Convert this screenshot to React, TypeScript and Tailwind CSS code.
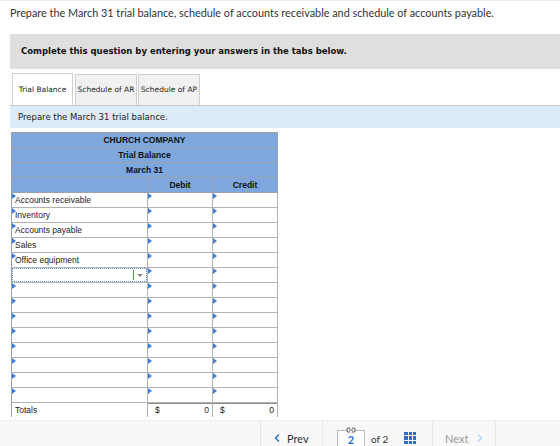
import React from "react";
import { ChevronLeft, ChevronRight, Link2 } from "lucide-react";

const verdana = { fontFamily: '"DejaVu Sans", Verdana, sans-serif' };
const arial = { fontFamily: '"Liberation Sans", Arial, sans-serif' };
const proxima = { fontFamily: 'Lato, "Open Sans", sans-serif' };

function Marker() {
  return (
    <span className="absolute left-0 top-0 w-0 h-0 border-t-[3px] border-b-[3px] border-l-[4px] border-t-transparent border-b-transparent border-l-[#3f7fd9]" />
  );
}

const accounts = ["Accounts receivable", "Inventory", "Accounts payable", "Sales", "Office equipment"];

const rowGrid = "grid grid-cols-[136px_65px_65px] h-[15px]";

function HeaderRow({ text }: { text: string }) {
  return (
    <div className="h-[15px] bg-[#7ea7de] border-b border-r border-[#9aa3ad] flex items-center justify-center font-bold text-[8.5px] text-[#111]">
      {text}
    </div>
  );
}

function Cell({ children }: { children?: React.ReactNode }) {
  return (
    <div className="relative border-r border-b border-[#b3b3b3] pl-[3px] flex items-end">
      <Marker />
      {children}
    </div>
  );
}

export default function App() {
  const blanks = Array.from({ length: 8 });
  return (
    <div className="w-[560px] h-[446px] overflow-hidden bg-white relative border-t border-[#ececec]">
      <p className="ml-[10px] mt-[5px] text-[10.85px] leading-[14px] text-[#333]" style={proxima}>
        Prepare the March 31 trial balance, schedule of accounts receivable and schedule of accounts payable.
      </p>

      <div className="ml-[10px] mt-[14px] h-[35px] bg-[#dfdfdf] flex items-center pl-[11px]">
        <span className="text-[8.5px] font-bold text-[#111]" style={verdana}>
          Complete this question by entering your answers in the tabs below.
        </span>
      </div>

      <div className="ml-[10px] mt-[4px]">
        <div className="flex pl-[2px] h-[32px] items-end">
          <div className="h-[32px] w-[61px] bg-white border border-b-0 border-[#cfcfcf] flex items-center justify-center text-[7.5px] text-[#222] relative z-10 whitespace-nowrap" style={verdana}>
            Trial Balance
          </div>
          <div className="ml-[2px] h-[31px] w-[62px] bg-[#f1f1f1] border border-b-0 border-[#cfcfcf] flex items-center justify-center text-[7.5px] text-[#222] whitespace-nowrap" style={verdana}>
            Schedule of AR
          </div>
          <div className="ml-[1px] h-[31px] w-[62px] bg-[#f1f1f1] border border-b-0 border-[#cfcfcf] flex items-center justify-center text-[7.5px] text-[#222] whitespace-nowrap" style={verdana}>
            Schedule of AP
          </div>
        </div>
        <div className="h-[23px] bg-[#dcebf8] border-t border-[#c9c9c9] flex items-center pl-[8px]">
          <span className="text-[8.5px] text-[#222]" style={verdana}>
            Prepare the March 31 trial balance.
          </span>
        </div>
      </div>

      <div className="ml-[11px] mt-[4px] w-[267px] border-l border-[#9aa3ad] text-[#222]" style={arial}>
        <div className="border-t border-[#9aa3ad]">
          <HeaderRow text="CHURCH COMPANY" />
          <HeaderRow text="Trial Balance" />
          <HeaderRow text="March 31" />
          <div className={`${rowGrid} bg-[#7ea7de] font-bold text-[8.5px] text-[#111]`}>
            <div className="border-r border-b border-[#9aa3ad]" />
            <div className="border-r border-b border-[#9aa3ad] flex items-center justify-center">Debit</div>
            <div className="border-r border-b border-[#9aa3ad] flex items-center justify-center">Credit</div>
          </div>
        </div>
        <div className="text-[8.5px]">
          {accounts.map((a) => (
            <div key={a} className={rowGrid}>
              <Cell>
                <span className="leading-[13px]">{a}</span>
              </Cell>
              <Cell />
              <Cell />
            </div>
          ))}
          <div className={rowGrid}>
            <div className="relative border-r border-b border-[#b3b3b3]">
              <div className="absolute inset-0 border border-dotted border-[#5b8fd6] flex justify-end">
                <div className="w-[13px] my-[1px] border-l border-[#4d82cf] flex items-center justify-center">
                  <span className="w-0 h-0 border-l-[3px] border-r-[3px] border-t-[3px] border-l-transparent border-r-transparent border-t-[#8a8a8a]" />
                </div>
              </div>
            </div>
            <Cell />
            <Cell />
          </div>
          {blanks.map((_, i) => (
            <div key={i} className={rowGrid}>
              <Cell />
              <Cell />
              <Cell />
            </div>
          ))}
          <div className="grid grid-cols-[136px_65px_65px] h-[14px]">
            <div className="border-r border-[#b3b3b3] pl-[3px] flex items-center">Totals</div>
            <div className="border-r border-[#b3b3b3] border-t-2 border-t-[#8c8c8c] -mt-[1px] flex items-center justify-between pl-[7px] pr-[3px]">
              <span>$</span>
              <span>0</span>
            </div>
            <div className="border-r border-[#b3b3b3] border-t-2 border-t-[#8c8c8c] -mt-[1px] flex items-center justify-between pl-[7px] pr-[3px]">
              <span>$</span>
              <span>0</span>
            </div>
          </div>
        </div>
      </div>

      <div className="absolute left-0 right-0 top-[419px] bottom-0 bg-[#f8f8f8] border-t border-[#f0f0f0] flex" style={proxima}>
        <div className="w-[260px]" />
        <div className="w-[62px] border-l border-[#e6e6e6] flex items-end pl-[10px] gap-[4px]">
          <ChevronLeft size={12} strokeWidth={3} className="text-[#2a6fd0] mb-[2px]" />
          <span className="text-[11px] leading-[14px] text-[#333]">Prev</span>
        </div>
        <div className="w-[110px] border-l border-[#e6e6e6] flex items-end pl-[14px]">
          <div className="relative w-[28px] h-[16px] border border-b-0 border-[#bdbdbd] bg-white flex items-end justify-center">
            <Link2 size={10} strokeWidth={2.5} className="absolute -top-[6px] left-[8px] text-[#666] bg-[#f8f8f8]" />
            <span className="text-[11px] leading-[13px] font-bold text-[#2a6fd0]">2</span>
          </div>
          <span className="ml-[6px] text-[10px] leading-[13px] text-[#333]">of 2</span>
          <div className="ml-[16px] mb-[2px] grid grid-cols-3 gap-[1px] w-[12px] h-[12px]">
            {Array.from({ length: 9 }).map((_, i) => (
              <span key={i} className="bg-[#2a6fd0]" />
            ))}
          </div>
        </div>
        <div className="w-[64px] border-l border-r border-[#e6e6e6] flex items-end pl-[12px] gap-[6px]">
          <span className="text-[11px] leading-[14px] text-[#9a9a9a]">Next</span>
          <ChevronRight size={12} strokeWidth={3} className="text-[#b7d0f0] mb-[2px]" />
        </div>
      </div>
    </div>
  );
}
